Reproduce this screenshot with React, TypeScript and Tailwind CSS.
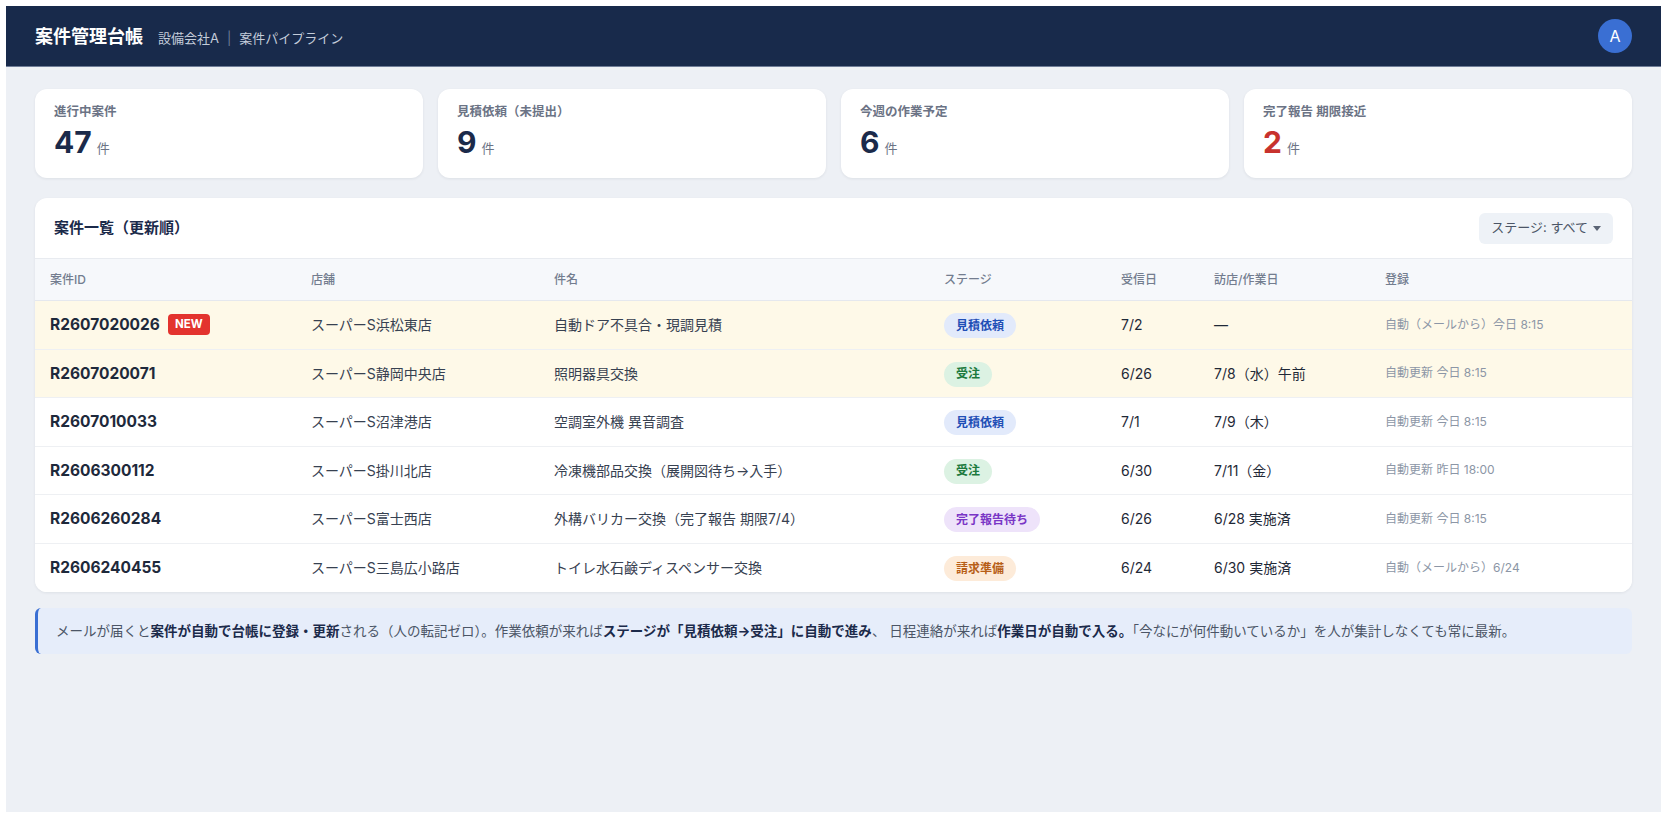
import React from "react";

type Stage = "見積依頼" | "受注" | "完了報告待ち" | "請求準備";

const stageStyle: Record<Stage, string> = {
  見積依頼: "bg-[#e2eafb] text-[#1f4fb6]",
  受注: "bg-[#dcf2e3] text-[#1d7a3e]",
  完了報告待ち: "bg-[#eee3fa] text-[#7a36c6]",
  請求準備: "bg-[#fdebd9] text-[#b75e17]",
};

const rows: {
  id: string;
  isNew?: boolean;
  hl?: boolean;
  store: string;
  name: string;
  stage: Stage;
  recv: string;
  work: string;
  reg: string;
}[] = [
  { id: "R2607020026", isNew: true, hl: true, store: "スーパーS浜松東店", name: "自動ドア不具合・現調見積", stage: "見積依頼", recv: "7/2", work: "—", reg: "自動（メールから）今日 8:15" },
  { id: "R2607020071", hl: true, store: "スーパーS静岡中央店", name: "照明器具交換", stage: "受注", recv: "6/26", work: "7/8（水）午前", reg: "自動更新 今日 8:15" },
  { id: "R2607010033", store: "スーパーS沼津港店", name: "空調室外機 異音調査", stage: "見積依頼", recv: "7/1", work: "7/9（木）", reg: "自動更新 今日 8:15" },
  { id: "R2606300112", store: "スーパーS掛川北店", name: "冷凍機部品交換（展開図待ち→入手）", stage: "受注", recv: "6/30", work: "7/11（金）", reg: "自動更新 昨日 18:00" },
  { id: "R2606260284", store: "スーパーS富士西店", name: "外構バリカー交換（完了報告 期限7/4）", stage: "完了報告待ち", recv: "6/26", work: "6/28 実施済", reg: "自動更新 今日 8:15" },
  { id: "R2606240455", store: "スーパーS三島広小路店", name: "トイレ水石鹸ディスペンサー交換", stage: "請求準備", recv: "6/24", work: "6/30 実施済", reg: "自動（メールから）6/24" },
];

const cards = [
  { label: "進行中案件", value: "47", red: false },
  { label: "見積依頼（未提出）", value: "9", red: false },
  { label: "今週の作業予定", value: "6", red: false },
  { label: "完了報告 期限接近", value: "2", red: true },
];

const gridCols = "grid grid-cols-[261px_243px_390px_177px_93px_171px_1fr]";

export default function App() {
  return (
    <div className="bg-white p-[6px] font-['Inter','Noto_Sans_CJK_JP',sans-serif]">
      <div className="h-[806px] bg-[#edf0f5] flex flex-col">
        {/* header */}
        <header className="h-[61px] shrink-0 bg-[#182a4b] border-b border-[#6f7d98] px-[29px] flex items-center justify-between">
          <div className="flex items-baseline">
            <span className="text-white font-bold text-[18px]">案件管理台帳</span>
            <span className="ml-[15px] text-[13px] text-[#c3ccda]">設備会社A</span>
            <span className="mx-[8px] text-[13px] text-[#6f7c96]">|</span>
            <span className="text-[13px] text-[#c3ccda]">案件パイプライン</span>
          </div>
          <div className="w-[34px] h-[34px] rounded-full bg-[#3a6fd3] text-white text-[16px] flex items-center justify-center">
            A
          </div>
        </header>

        <main className="px-[29px] pt-[22px] flex flex-col">
          {/* summary cards */}
          <div className="grid grid-cols-4 gap-[15px]">
            {cards.map((c) => (
              <div
                key={c.label}
                className="h-[89px] bg-white rounded-[12px] shadow-[0_1px_3px_rgba(15,23,42,0.07)] px-[19px] pt-[15px]"
              >
                <div className="text-[12.5px] leading-[16px] font-semibold text-[#6b7385]">{c.label}</div>
                <div className="mt-[4px] flex items-baseline">
                  <span className={`text-[30px] leading-[36px] font-bold ${c.red ? "text-[#c8322d]" : "text-[#1b2a4a]"}`}>
                    {c.value}
                  </span>
                  <span className="ml-[5px] text-[13px] text-[#6b7385]">件</span>
                </div>
              </div>
            ))}
          </div>

          {/* table panel */}
          <section className="mt-[20px] bg-white rounded-[12px] shadow-[0_1px_3px_rgba(15,23,42,0.07)] overflow-hidden">
            <div className="h-[61px] border-b border-[#e8ebf0] pl-[19px] pr-[19px] flex items-center justify-between">
              <h2 className="text-[15px] font-bold text-[#1b2a4a]">案件一覧（更新順）</h2>
              <button className="h-[31px] px-[12px] rounded-[6px] bg-[#eef2f7] text-[13px] text-[#4b5566] flex items-center gap-[5px]">
                ステージ: すべて
                <svg width="8" height="5" viewBox="0 0 8 5" className="mt-[1px]">
                  <path d="M0 0 L8 0 L4 5 Z" fill="#5b6475" />
                </svg>
              </button>
            </div>

            <div className={`${gridCols} h-[42px] bg-[#f6f8fb] border-b border-[#e5e8ee] items-center text-[12px] font-medium text-[#737d8f]`}>
              <div className="pl-[15px]">案件ID</div>
              <div className="pl-[15px]">店舗</div>
              <div className="pl-[15px]">件名</div>
              <div className="pl-[15px]">ステージ</div>
              <div className="pl-[15px]">受信日</div>
              <div className="pl-[15px]">訪店/作業日</div>
              <div className="pl-[15px]">登録</div>
            </div>

            {rows.map((r, i) => (
              <div
                key={r.id}
                className={`${gridCols} h-[48.5px] items-center ${i < rows.length - 1 ? "border-b border-[#eef0f3]" : ""} ${
                  r.hl ? "bg-[#fef9e8]" : "bg-white"
                }`}
              >
                <div className="pl-[15px] flex items-center">
                  <span className="text-[15.5px] font-bold text-[#1e293b]">{r.id}</span>
                  {r.isNew && (
                    <span className="ml-[8px] h-[21px] px-[7px] rounded-[4px] bg-[#e3332e] text-white text-[11.5px] font-bold flex items-center">
                      NEW
                    </span>
                  )}
                </div>
                <div className="pl-[15px] text-[14px] text-[#374151]">{r.store}</div>
                <div className="pl-[15px] text-[14px] text-[#374151]">{r.name}</div>
                <div className="pl-[15px]">
                  <span className={`inline-flex items-center h-[25px] px-[12px] rounded-full text-[12px] font-bold ${stageStyle[r.stage]}`}>
                    {r.stage}
                  </span>
                </div>
                <div className="pl-[15px] text-[14px] text-[#1f2937]">{r.recv}</div>
                <div className="pl-[15px] text-[14px] text-[#1f2937]">{r.work}</div>
                <div className="pl-[15px] text-[12px] text-[#8c96a6]">{r.reg}</div>
              </div>
            ))}
          </section>

          {/* info */}
          <div className="mt-[16px] h-[46px] bg-[#e6edfa] border-l-[3px] border-[#3a6fd3] rounded-[6px] pl-[18px] flex items-center text-[13.5px] text-[#4b5566] whitespace-nowrap">
            <p>
              メールが届くと<b className="font-bold text-[#1b2a4a]">案件が自動で台帳に登録・更新</b>される（人の転記ゼロ）。作業依頼が来れば
              <b className="font-bold text-[#1b2a4a]">ステージが「見積依頼→受注」に自動で進み</b>、 日程連絡が来れば
              <b className="font-bold text-[#1b2a4a]">作業日が自動で入る。</b>「今なにが何件動いているか」を人が集計しなくても常に最新。
            </p>
          </div>
        </main>
      </div>
    </div>
  );
}
